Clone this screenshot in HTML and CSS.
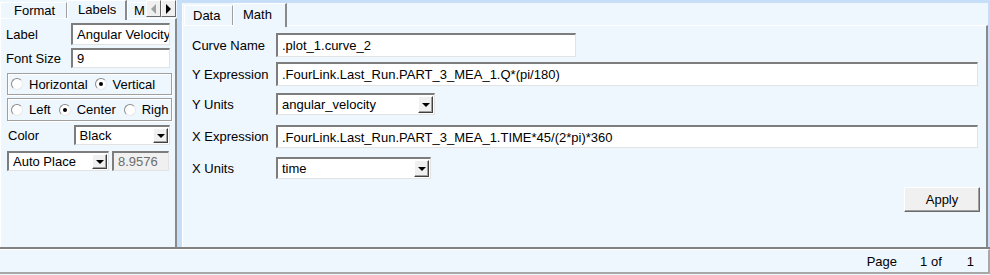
FILE: index.html
```html
<!DOCTYPE html>
<html lang="en">
<head>
    <meta charset="UTF-8">
    <title>Curve Properties</title>
    <link rel="stylesheet" href="styles.css">
</head>
<body>
    <div class="main">
        <div class="left">
            <div class="ltabs">
                <div class="ltab">Format</div>
                <div class="ltab active">Labels</div>
                <div class="ltab cut">M</div>
                <div class="spin">
                    <span class="spin-btn"><i class="tri-left"></i></span>
                    <span class="spin-btn"><i class="tri-right"></i></span>
                </div>
            </div>
            <div class="lpanel">
                <div class="lrow">
                    <span class="llabel">Label</span>
                    <div class="field lfield">Angular Velocity</div>
                </div>
                <div class="lrow r2">
                    <span class="llabel">Font Size</span>
                    <div class="field lfield short">9</div>
                </div>
                <div class="group g1">
                    <label class="opt"><span class="radio"></span>Horizontal</label>
                    <label class="opt"><span class="radio on"></span>Vertical</label>
                </div>
                <div class="group g2">
                    <label class="opt"><span class="radio"></span>Left</label>
                    <label class="opt"><span class="radio on"></span>Center</label>
                    <label class="opt"><span class="radio"></span>Righ</label>
                </div>
                <div class="lrow r5">
                    <span class="llabel color">Color</span>
                    <div class="select color-sel"><span class="val">Black</span><span class="drop"><i></i></span></div>
                </div>
                <div class="lrow r6">
                    <div class="select place-sel"><span class="val">Auto Place</span><span class="drop"><i></i></span></div>
                    <div class="field disabled">8.9576</div>
                </div>
            </div>
        </div>
        <div class="splitter"></div>
        <div class="right">
            <div class="rtabs">
                <div class="rtab">Data</div>
                <div class="rtab active">Math</div>
            </div>
            <div class="rpanel">
                <div class="row">
                    <span class="label">Curve Name</span>
                    <div class="field name">.plot_1.curve_2</div>
                </div>
                <div class="row gap5">
                    <span class="label">Y Expression</span>
                    <div class="field expr">.FourLink.Last_Run.PART_3_MEA_1.Q*(pi/180)</div>
                </div>
                <div class="row gap7">
                    <span class="label">Y Units</span>
                    <div class="select yunits"><span class="val">angular_velocity</span><span class="drop"><i></i></span></div>
                </div>
                <div class="row gap10">
                    <span class="label">X Expression</span>
                    <div class="field expr x">.FourLink.Last_Run.PART_3_MEA_1.TIME*45/(2*pi)*360</div>
                </div>
                <div class="row gap9">
                    <span class="label">X Units</span>
                    <div class="select xunits"><span class="val">time</span><span class="drop"><i></i></span></div>
                </div>
                <div class="actions">
                    <button class="btn">Apply</button>
                </div>
            </div>
        </div>
    </div>
    <div class="status">
        <span>Page</span>
        <span class="pg">1 of</span>
        <span class="pg-total">1</span>
    </div>
</body>
</html>
```

FILE: styles.css
```css
body {
    margin: 0;
    width: 990px;
    height: 275px;
    overflow: hidden;
    background: #eef6fe;
    font-family: "Liberation Sans", Arial, sans-serif;
    font-size: 13px;
    color: #000;
}
.main {
    display: flex;
    height: 247px;
    border-bottom: 2px solid #828282;
}

/* left panel */
.left {
    width: 177px;
    display: flex;
    flex-direction: column;
}
.ltabs {
    display: flex;
    height: 18px;
    align-items: flex-end;
}
.ltab {
    height: 16px;
    line-height: 16px;
    padding: 0 12px 0 13px;
    border-left: 1px solid #fff;
    border-right: 1px solid #a0a0a0;
    border-top: 1px solid #fff;
    box-sizing: border-box;
    width: 68px;
}
.ltab:first-child {
    width: 67px;
}
.ltab.active {
    height: 20px;
    line-height: 17px;
    width: 60px;
    padding: 0 9px 0 10px;
    border-right: 2px solid #8a8a8a;
    margin-bottom: -2px;
    background: #eef6fe;
    position: relative;
    z-index: 1;
}
.ltab.cut {
    width: 19px;
    flex-shrink: 0;
    padding: 0 0 0 6px;
    overflow: hidden;
    border-right: none;
}
.spin {
    display: flex;
    align-self: flex-start;
}
.spin-btn {
    width: 15px;
    height: 17px;
    box-sizing: border-box;
    background: #f0f0f0;
    border: 1px solid;
    border-color: #fff #696969 #696969 #fff;
    display: flex;
    align-items: center;
    justify-content: center;
}
.tri-left {
    border-right: 5px solid #a0a0a0;
    border-top: 5px solid transparent;
    border-bottom: 5px solid transparent;
}
.tri-right {
    border-left: 5px solid #000;
    border-top: 5px solid transparent;
    border-bottom: 5px solid transparent;
}
.lpanel {
    flex: 1;
    border-top: 1px solid #fff;
    border-left: 1px solid #fff;
    border-right: 2px solid #8a8a8a;
    padding: 4px 5px 0 5px;
}
.lrow {
    display: flex;
    align-items: center;
}
.llabel {
    width: 65px;
}
.llabel.color {
    width: 66px;
    padding-left: 2px;
}
.field {
    box-sizing: border-box;
    background: #fff;
    border-top: 2px solid #7d7d7d;
    border-left: 2px solid #7d7d7d;
    border-right: 1px solid #e3e3e3;
    border-bottom: 1px solid #e3e3e3;
    padding-left: 4px;
    white-space: nowrap;
    overflow: hidden;
    display: flex;
    align-items: center;
}
.lfield {
    width: 99px;
    height: 22px;
}
.lfield.short {
    height: 20px;
}
.r2 {
    margin-top: 3px;
}
.group {
    margin-top: 5px;
    margin-left: 1px;
    width: 165px;
    height: 22px;
    box-sizing: border-box;
    border: 1px solid #a0a0a0;
    box-shadow: inset 1px 1px 0 #fff, 1px 1px 0 #fff;
    display: flex;
    align-items: center;
    padding-left: 3px;
    overflow: hidden;
    white-space: nowrap;
}
.g1 {
    gap: 7px;
}
.g2 {
    margin-top: 3px;
    height: 23px;
    gap: 8px;
}
.opt {
    display: flex;
    align-items: center;
}
.radio {
    width: 12px;
    height: 12px;
    box-sizing: border-box;
    border-radius: 50%;
    background: #fff;
    border: 1px solid;
    border-color: #8a8a8a #e8e8e8 #e8e8e8 #8a8a8a;
    margin-right: 6px;
    position: relative;
}
.radio.on::after {
    content: "";
    position: absolute;
    left: 3px;
    top: 3px;
    width: 4px;
    height: 4px;
    border-radius: 50%;
    background: #000;
}
.select {
    box-sizing: border-box;
    background: #fff;
    border-top: 2px solid #7d7d7d;
    border-left: 2px solid #7d7d7d;
    border-right: 1px solid #e3e3e3;
    border-bottom: 1px solid #e3e3e3;
    display: flex;
    align-items: stretch;
}
.select .val {
    flex: 1;
    padding-left: 4px;
    display: flex;
    align-items: center;
    white-space: nowrap;
}
.drop {
    width: 15px;
    box-sizing: border-box;
    background: #f0f0f0;
    border: 1px solid;
    border-color: #fff #404040 #404040 #fff;
    box-shadow: inset -1px -1px 0 #a0a0a0;
    margin: 1px 1px 1px 0;
    display: flex;
    align-items: center;
    justify-content: center;
}
.drop i {
    border-top: 4px solid #000;
    border-left: 4px solid transparent;
    border-right: 4px solid transparent;
}
.r5 {
    margin-top: 4px;
}
.color-sel {
    width: 97px;
    height: 20px;
}
.r6 {
    margin-top: 6px;
    padding-left: 1px;
    gap: 3px;
}
.place-sel {
    width: 102px;
    height: 20px;
}
.field.disabled {
    width: 57px;
    height: 20px;
    background: #f0f0f0;
    color: #6d6d6d;
}

.splitter {
    width: 5px;
    background: #c6def7;
}

/* right panel */
.right {
    flex: 1;
    background: #c6def7;
    padding: 3px 2px 0 0;
    display: flex;
    flex-direction: column;
}
.rtabs {
    display: flex;
    height: 22px;
    align-items: flex-end;
    background: #eef6fe;
    border-left: 1px solid #fff;
    padding-left: 1px;
}
.rtab {
    height: 20px;
    box-sizing: border-box;
    padding: 2px 8px 0 8px;
    width: 49px;
    border-top: 1px solid #fff;
    border-left: 1px solid #fff;
    border-right: 1px solid #a0a0a0;
}
.rtab.active {
    height: 24px;
    width: 54px;
    padding: 3px 8px 0 9px;
    margin-bottom: -2px;
    border-right: 2px solid #8a8a8a;
    background: #eef6fe;
    position: relative;
    z-index: 1;
}
.rpanel {
    flex: 1;
    background: #eef6fe;
    border-top: 1px solid #fff;
    border-left: 1px solid #fff;
    border-right: 2px solid #8a8a8a;
    padding: 7px 6px 0 9px;
}
.row {
    display: flex;
    align-items: center;
}
.label {
    width: 84px;
}
.field.name {
    width: 300px;
    height: 24px;
}
.field.expr {
    width: 702px;
    height: 24px;
}
.field.expr.x {
    height: 23px;
}
.gap5 {
    margin-top: 5px;
}
.gap7 {
    margin-top: 7px;
}
.gap9 {
    margin-top: 9px;
}
.gap10 {
    margin-top: 10px;
}
.yunits {
    width: 159px;
    height: 22px;
}
.xunits {
    width: 155px;
    height: 22px;
}
.actions {
    display: flex;
    justify-content: flex-end;
    margin-top: 8px;
}
.btn {
    width: 76px;
    height: 25px;
    background: #f0f0f0;
    border: 1px solid;
    border-color: #fff #696969 #696969 #fff;
    box-shadow: inset -1px -1px 0 #a0a0a0;
    font-family: inherit;
    font-size: 13px;
    color: #000;
    padding: 0;
}

/* status bar */
.status {
    height: 22px;
    border-top: 1px solid #fff;
    border-bottom: 2px solid #a8a8a8;
    border-right: 2px solid #a8a8a8;
    display: flex;
    align-items: center;
    justify-content: flex-end;
    padding-right: 14px;
}
.pg {
    margin-left: 23px;
}
.pg-total {
    margin-left: 25px;
}
```
